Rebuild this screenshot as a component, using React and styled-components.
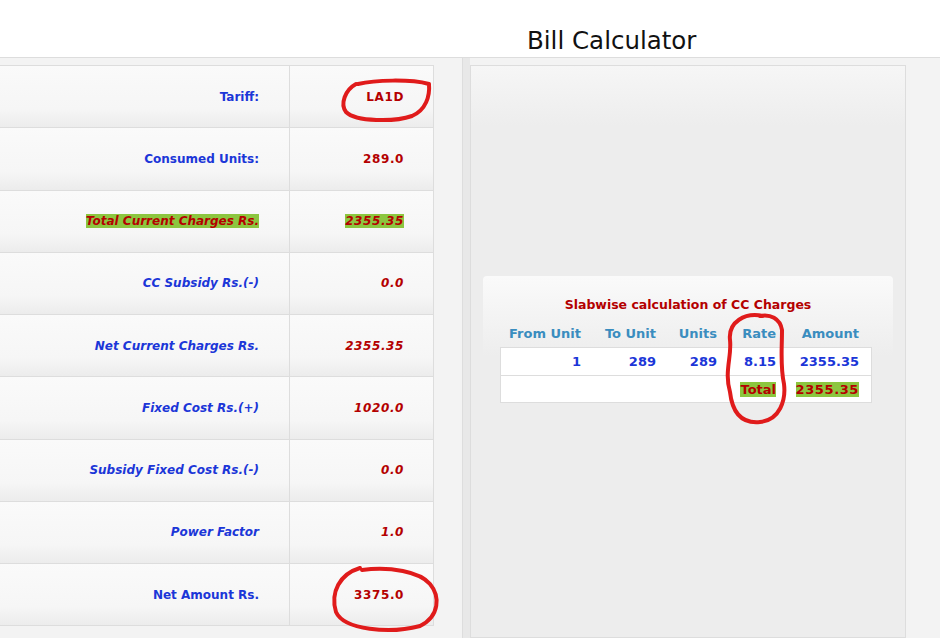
import React from "react";
import styled, { createGlobalStyle } from "styled-components";

const Global = createGlobalStyle`
  html, body { margin: 0; padding: 0; background: #fff; }
  body { font-family: "DejaVu Sans", Verdana, sans-serif; }
`;

const rows = [
  { label: "Tariff:", value: "LA1D" },
  { label: "Consumed Units:", value: "289.0" },
  { label: "Total Current Charges Rs.", value: "2355.35", italic: true, hl: true },
  { label: "CC Subsidy Rs.(-)", value: "0.0", italic: true },
  { label: "Net Current Charges Rs.", value: "2355.35", italic: true },
  { label: "Fixed Cost Rs.(+)", value: "1020.0", italic: true },
  { label: "Subsidy Fixed Cost Rs.(-)", value: "0.0", italic: true },
  { label: "Power Factor", value: "1.0", italic: true },
  { label: "Net Amount Rs.", value: "3375.0" },
];

const Page = styled.div`
  position: relative;
  width: 940px;
  height: 638px;
  overflow: hidden;
`;

const Header = styled.div`
  height: 58px;
  border-bottom: 1px solid #ddd;
  display: flex;
  align-items: flex-end;
  padding-left: 527px;
  box-sizing: border-box;
`;

const Title = styled.h1`
  margin: 0 0 2px;
  font-family: "DejaVu Sans", sans-serif;
  font-weight: normal;
  font-size: 24.5px;
  color: #111;
`;

const Body = styled.div`
  display: flex;
  height: 580px;
  background: #f3f3f3;
`;

const Left = styled.div`
  width: 463px;
  padding-top: 7px;
  border-right: 1px solid #ddd;
  box-sizing: border-box;
`;

const Table = styled.div`
  width: 434px;
  border-top: 1px solid #ddd;
`;

const Row = styled.div`
  display: grid;
  grid-template-columns: 290px 144px;
  height: 62.25px;
  box-sizing: border-box;
  border-bottom: 1px solid #ddd;
  background: linear-gradient(#fafafa, #f6f6f6 70%, #ececec);
`;

const Cell = styled.div`
  display: flex;
  align-items: center;
  justify-content: flex-end;
  padding-right: ${(p) => p.pr}px;
  border-right: 1px solid #ddd;
  font-size: 12px;
  font-weight: bold;
  font-style: ${(p) => (p.italic ? "italic" : "normal")};
`;

const Text = styled.span`
  color: ${(p) => (p.red || p.hl ? "#b40000" : "#1b36d8")};
  background: ${(p) => (p.hl ? "#8cc63f" : "transparent")};
  letter-spacing: ${(p) => (p.red ? "0.6px" : "0")};
`;

const Gap = styled.div`
  width: 7px;
  background: #e8e8e8;
`;

const Right = styled.div`
  width: 436px;
  margin-top: 7px;
  height: 573px;
  border: 1px solid #ddd;
  box-sizing: border-box;
  background: linear-gradient(#f6f6f6, #ededed 60px, #ededed);
  padding: 210px 12px 0;
`;

const SlabBox = styled.div`
  background: linear-gradient(#fafafa, #ededed 80px);
  border-radius: 4px;
  padding: 21px 17px 0;
`;

const SlabTitle = styled.div`
  text-align: center;
  color: #b40000;
  font-weight: bold;
  font-size: 12.5px;
  margin-bottom: 8px;
`;

const Grid = styled.div`
  display: grid;
  grid-template-columns: 81px 75px 61px 59px 83px 13px;
  width: 372px;
`;

const Th = styled.div`
  height: 27px;
  display: flex;
  align-items: center;
  justify-content: flex-end;
  color: #3a8dbf;
  font-weight: bold;
  font-size: 13px;
`;

const Td = styled.div`
  height: 28px;
  box-sizing: border-box;
  display: flex;
  align-items: center;
  justify-content: flex-end;
  background: #fff;
  border-top: 1px solid #ddd;
  border-left: ${(p) => (p.first ? "1px solid #ddd" : "0")};
  border-right: ${(p) => (p.last ? "1px solid #ddd" : "0")};
  border-bottom: ${(p) => (p.bottom ? "1px solid #ddd" : "0")};
  font-weight: bold;
  font-size: 13px;
  letter-spacing: 0.6px;
`;

const Marks = styled.svg`
  position: absolute;
  inset: 0;
  pointer-events: none;
`;

export default function App() {
  const slab = ["1", "289", "289", "8.15", "2355.35", ""];
  return (
    <Page>
      <Global />
      <Header>
        <Title>Bill Calculator</Title>
      </Header>
      <Body>
        <Left>
          <Table>
            {rows.map((r) => (
              <Row key={r.label}>
                <Cell pr={30} italic={r.italic}>
                  <Text hl={r.hl}>{r.label}</Text>
                </Cell>
                <Cell pr={29} italic={r.italic}>
                  <Text red hl={r.hl}>{r.value}</Text>
                </Cell>
              </Row>
            ))}
          </Table>
        </Left>
        <Gap />
        <Right>
          <SlabBox>
            <SlabTitle>Slabwise calculation of CC Charges</SlabTitle>
            <Grid>
              {["From Unit", "To Unit", "Units", "Rate", "Amount", ""].map((h) => (
                <Th key={h}>{h}</Th>
              ))}
              {slab.map((v, i) => (
                <Td key={"a" + i} first={i === 0} last={i === 5}>
                  <Text>{v}</Text>
                </Td>
              ))}
              {["", "", "", "Total", "2355.35", ""].map((v, i) => (
                <Td key={"b" + i} bottom first={i === 0} last={i === 5}>
                  {v && <Text red={i === 4} hl>{v}</Text>}
                </Td>
              ))}
            </Grid>
          </SlabBox>
        </Right>
      </Body>
      <Marks width="940" height="638" viewBox="0 0 940 638">
        <g fill="none" stroke="#e01b1b" strokeWidth="4" strokeLinecap="round" strokeLinejoin="round">
          <path d="M356 84 C345 90 340 104 346 112 C356 122 395 122 412 116 C426 110 430 96 429 84 C410 79 375 80 358 84" />
          <path d="M360 568 C340 574 330 592 336 612 C344 630 390 634 420 626 C440 616 440 596 430 584 C420 572 390 566 362 570" />
          <path d="M763 316 C745 312 728 322 730 340 C732 356 724 372 730 392 C732 410 740 424 760 422 C780 420 786 400 784 384 C780 366 782 350 782 330 C780 318 770 314 760 316" />
        </g>
      </Marks>
    </Page>
  );
}
